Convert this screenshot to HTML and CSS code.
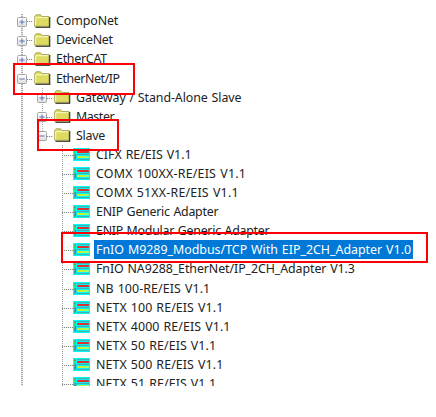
FILE: index.html
```
<!DOCTYPE html>
<html lang="en">
<head>
<meta charset="utf-8">
<title>Device catalog</title>
<link rel="stylesheet" href="styles.css">
</head>
<body>
<svg class="defs" width="0" height="0">
  <defs>
    <linearGradient id="face" x2="0" y2="1"><stop offset="0" stop-color="#fff"/><stop offset="1" stop-color="#dedede"/></linearGradient>
    <symbol id="minus" viewBox="0 0 10 10"><rect x=".5" y=".5" width="9" height="9" rx="1" fill="url(#face)" stroke="#a5a5a5"/><path d="M2.4 5h5.2" stroke="#5d70b8" stroke-width="1"/></symbol>
    <symbol id="plus" viewBox="0 0 10 10"><rect x=".5" y=".5" width="9" height="9" rx="1" fill="url(#face)" stroke="#a5a5a5"/><path d="M2.4 5h5.2M5 2.4v5.2" stroke="#5d70b8" stroke-width="1"/></symbol>
    <symbol id="folder" viewBox="0 0 17 14"><path d="M1.5 13.1h14.1V3" fill="none" stroke="#151510" stroke-width="1.3"/><path d="M.7 12.3V2.6L2.2.8h4.3L8 2.6h7v9.7z" fill="#dddb62" stroke="#96944a" stroke-width=".8"/><path d="M1.7 11.5V3.7h12.6" fill="none" stroke="#fcfbc4" stroke-width="1"/></symbol>
    <symbol id="device" viewBox="0 0 17 13"><path fill="#00f8f8" d="M0 0h17v13H0z"/><path d="M4 1.5h12M4 6.5h12M4 11.5h12" stroke="#4fa5a5" stroke-width=".9"/><path d="M4.5 4h11.2" stroke="#5d8d8d" stroke-width="2.2"/><path d="M4.6 4h11" stroke="#ff1010" stroke-width="2.2" stroke-dasharray="1.3 .64"/><path d="M4.6 9h11" stroke="#f4ff10" stroke-width="2.2" stroke-dasharray="1.3 .64"/><path d="M1 2.3h2" stroke="#8d8d3c" stroke-width="1.4"/><path d="M1 4.4h2" stroke="#22e554" stroke-width="1.6"/><path d="M1.2 6h2v5.5h-2z" fill="#56908e"/></symbol>
  </defs>
</svg>
<main class="tree">
  <div class="row snug"><svg class="exp"><use href="#plus"/></svg><i class="link"></i><svg class="folder"><use href="#folder"/></svg><span>CompoNet</span></div>
  <div class="row narrow"><svg class="exp"><use href="#plus"/></svg><i class="link"></i><svg class="folder"><use href="#folder"/></svg><span>DeviceNet</span></div>
  <div class="row narrow"><svg class="exp"><use href="#plus"/></svg><i class="link"></i><svg class="folder"><use href="#folder"/></svg><span>EtherCAT</span></div>
  <div class="row narrower"><svg class="exp"><use href="#minus"/></svg><i class="link"></i><svg class="folder"><use href="#folder"/></svg><span>EtherNet/IP</span></div>
  <div class="group">
    <div class="row snug"><svg class="exp"><use href="#plus"/></svg><i class="link"></i><svg class="folder"><use href="#folder"/></svg><span>Gateway / Stand-Alone Slave</span></div>
    <div class="row narrower"><svg class="exp"><use href="#plus"/></svg><i class="link"></i><svg class="folder"><use href="#folder"/></svg><span>Master</span></div>
    <div class="row narrow"><svg class="exp"><use href="#minus"/></svg><i class="link"></i><svg class="folder"><use href="#folder"/></svg><span>Slave</span></div>
  </div>
  <div class="devices">
    <div class="row"><i class="link"></i><svg class="device"><use href="#device"/></svg><span>CIFX RE/EIS V1.1</span></div>
    <div class="row wide"><i class="link"></i><svg class="device"><use href="#device"/></svg><span>COMX 100XX-RE/EIS V1.1</span></div>
    <div class="row wide"><i class="link"></i><svg class="device"><use href="#device"/></svg><span>COMX 51XX-RE/EIS V1.1</span></div>
    <div class="row narrow"><i class="link"></i><svg class="device"><use href="#device"/></svg><span>ENIP Generic Adapter</span></div>
    <div class="row narrow"><i class="link"></i><svg class="device"><use href="#device"/></svg><span>ENIP Modular Generic Adapter</span></div>
    <div class="row selected"><i class="link"></i><svg class="device"><use href="#device"/></svg><span>FnIO M9289_Modbus/TCP With EIP_2CH_Adapter V1.0</span></div>
    <div class="row snug"><i class="link"></i><svg class="device"><use href="#device"/></svg><span>FnIO NA9288_EtherNet/IP_2CH_Adapter V1.3</span></div>
    <div class="row loose"><i class="link"></i><svg class="device"><use href="#device"/></svg><span>NB 100-RE/EIS V1.1</span></div>
    <div class="row loose"><i class="link"></i><svg class="device"><use href="#device"/></svg><span>NETX 100 RE/EIS V1.1</span></div>
    <div class="row loose"><i class="link"></i><svg class="device"><use href="#device"/></svg><span>NETX 4000 RE/EIS V1.1</span></div>
    <div class="row loose"><i class="link"></i><svg class="device"><use href="#device"/></svg><span>NETX 50 RE/EIS V1.1</span></div>
    <div class="row loose"><i class="link"></i><svg class="device"><use href="#device"/></svg><span>NETX 500 RE/EIS V1.1</span></div>
    <div class="row loose"><i class="link"></i><svg class="device"><use href="#device"/></svg><span>NETX 51 RE/EIS V1.1</span></div>
  </div>
</main>
<div class="mark mark-network"></div>
<div class="mark mark-slave"></div>
<div class="mark mark-adapter"></div>
</body>
</html>
```
FILE: styles.css
```
body {
  display: flow-root;
  margin: 0;
  width: 436px;
  height: 417px;
  overflow: hidden;
  background: #fff;
  color: #222;
  font: 12.4px/19px "Noto Sans", "Open Sans", sans-serif;
  word-spacing: .7px;
}
.defs { position: absolute; }
.tree {
  box-sizing: border-box;
  height: 375px;
  margin-top: 11px;
  padding: .2px 0 0 17px;
  overflow: hidden;
  background: repeating-linear-gradient(#aaa 0 1px, #eee 1px 2px) 21px 3px / 2px 100% no-repeat;
}
.row {
  display: flex;
  align-items: center;
  height: 19.1px;
  white-space: nowrap;
}
.row svg { flex: none; }
.exp { width: 10px; height: 10px; margin-top: 2px; }
.link {
  width: 6px;
  height: 1px;
  margin: 2px 1px 0 0;
  background: repeating-linear-gradient(90deg, #888 0 1px, #eee 1px 2px);
}
.folder { width: 17px; height: 14px; }
.row span { padding: 0 2px 0 5px; line-height: 19px; }
.snug { letter-spacing: -.08px; }
.narrow { letter-spacing: -.26px; }
.narrower { letter-spacing: -.42px; }
.loose { letter-spacing: .09px; }
.wide { letter-spacing: .21px; }
.group {
  padding-left: 20px;
  background: repeating-linear-gradient(#aaa 0 1px, #fff 1px 2px) 25px 0 / 1px 50px no-repeat;
}
.devices {
  padding-left: 45px;
  background: repeating-linear-gradient(#999 0 1px, #fff 1px 2px) 45px 0 / 1px 100% no-repeat;
}
.devices .link { width: 11px; margin: 2px 0 0; }
.device { width: 17px; height: 13px; }
.devices .row span { padding: 0 2px; margin-left: 4px; }
.devices .selected span { padding-right: 1.5px; background: #0078d7; color: #fff; }
.mark { position: absolute; box-sizing: border-box; border: 2px solid #fb0007; }
.mark-network { left: 13px; top: 63px; width: 122px; height: 32px; }
.mark-slave { left: 37px; top: 119px; width: 82px; height: 32px; }
.mark-adapter { left: 61px; top: 232px; width: 367px; height: 31px; }
```
